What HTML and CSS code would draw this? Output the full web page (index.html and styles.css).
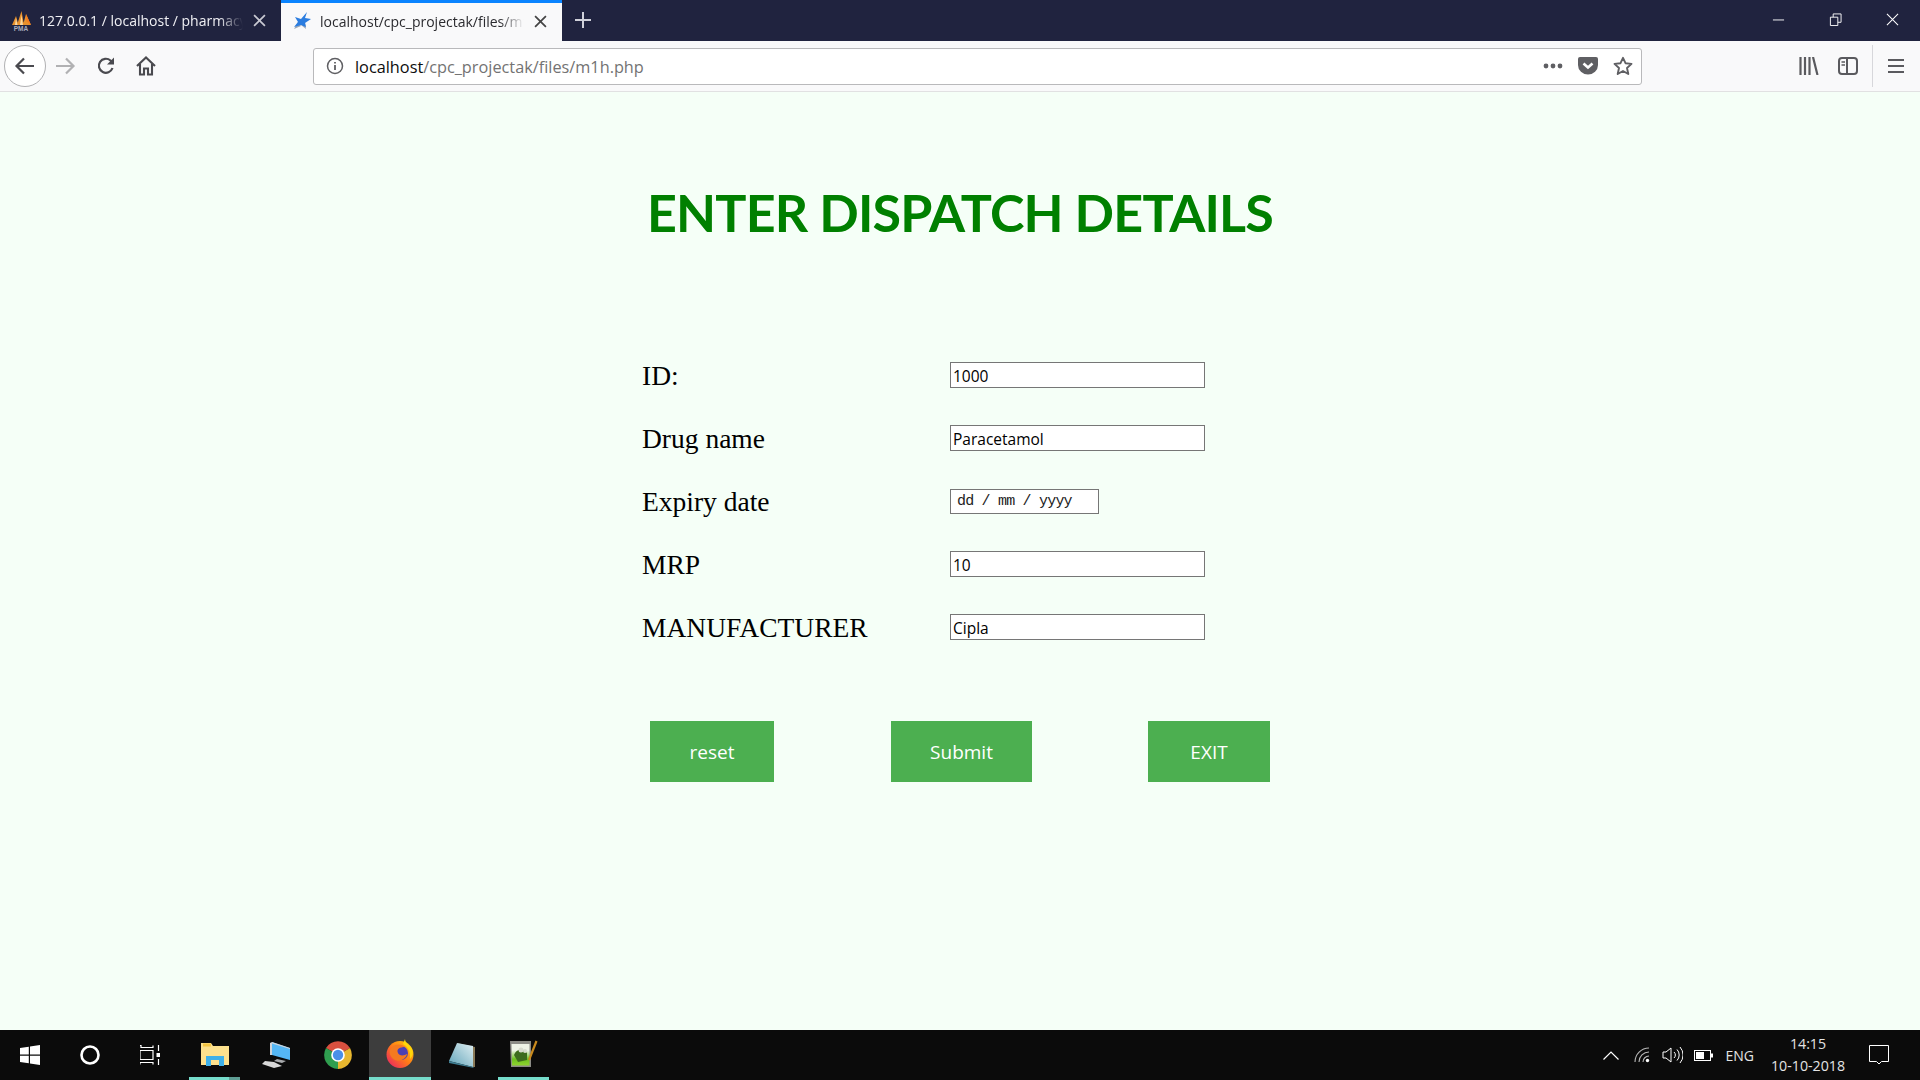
FILE: index.html
```html
<!DOCTYPE html>
<html lang="en">
<head>
    <meta charset="UTF-8">
    <title>localhost/cpc_projectak/files/m1h.php</title>
    <link rel="stylesheet" href="styles.css">
</head>
<body>
    <div class="window">
        <div class="tabbar">
            <div class="tab">
                <svg class="favicon" viewBox="0 0 20 20">
                    <path d="M1 14 L5 5 L7.500 14 Z M6 14 L10.500 0 L13 14 Z M12 14 L15 3 L20 14 Z" fill="#e8912c"/>
                    <path d="M4 14 L5 7 L6.500 14 Z M9 14 L10.500 4 L12 14 Z" fill="#fbd9a0"/>
                    <path d="M15 3 L20 14 L15.500 10 Z" fill="#f47a1f"/>
                    <text class="pma-text" x="10" y="20" text-anchor="middle">PMA</text>
                </svg>
                <span class="tab-title">127.0.0.1 / localhost / pharmacy</span>
                <svg class="tab-close" viewBox="0 0 12 12"><path d="M1 1 L11 11 M11 1 L1 11" stroke="#c8c9d2" stroke-width="1.6"/></svg>
            </div>
            <div class="tab tab-active">
                <svg class="favicon" viewBox="0 0 20 20">
                    <path d="M9 15 L2 18 L6 11 Z M14 18 L9 14 L13 11 Z" fill="#9aa7b8"/>
                    <path d="M15 1 L13 7 L19 8 L13 12 L14 16 L9 14 L2 16 L6 11 L3 6 L9 8 Z" fill="#2b7de0"/>
                </svg>
                <span class="tab-title">localhost/cpc_projectak/files/m1h.php</span>
                <svg class="tab-close" viewBox="0 0 12 12"><path d="M1 1 L11 11 M11 1 L1 11" stroke="#444" stroke-width="1.6"/></svg>
            </div>
            <div class="new-tab">
                <svg width="18" height="18" viewBox="0 0 18 18"><path d="M9 1 V17 M1 9 H17" stroke="#d0d1da" stroke-width="2"/></svg>
            </div>
            <div class="win-controls">
                <svg class="win-btn" viewBox="0 0 14 14"><path d="M1 7.5 H13" stroke="#fff"/></svg>
                <svg class="win-btn" viewBox="0 0 14 14"><path d="M1.5 4.5 H9.5 V13.5 H1.5 Z M4.5 4.5 V1 H13 V10 H9.5" fill="none" stroke="#fff"/></svg>
                <svg class="win-btn" viewBox="0 0 14 14"><path d="M1 1 L13 13 M13 1 L1 13" stroke="#fff" stroke-width="1.1"/></svg>
            </div>
        </div>

        <div class="toolbar">
            <div class="nav-btn back-btn">
                <svg width="22" height="22" viewBox="0 0 22 22"><path d="M20 11 H3 M10 3.5 L2.5 11 L10 18.5" fill="none" stroke="#4a4a4f" stroke-width="2.2"/></svg>
            </div>
            <div class="nav-btn">
                <svg width="22" height="22" viewBox="0 0 22 22"><path d="M2 11 H19 M12 3.5 L19.5 11 L12 18.5" fill="none" stroke="#b1b1b3" stroke-width="2.2"/></svg>
            </div>
            <div class="nav-btn nav-reload">
                <svg width="20" height="20" viewBox="0 0 20 20"><path d="M16.5 12 A7 7 0 1 1 14.5 4.5 L17 7" fill="none" stroke="#4a4a4f" stroke-width="2.2"/><path d="M18 1.5 V8.5 H11 Z" fill="#4a4a4f"/></svg>
            </div>
            <div class="nav-btn">
                <svg width="20" height="20" viewBox="0 0 20 20"><path d="M1 10 L10 1.5 L19 10 M4 8 V18.5 H8 V12.5 H12 V18.5 H16 V8" fill="none" stroke="#4a4a4f" stroke-width="2.1"/></svg>
            </div>
            <div class="urlbar">
                <svg class="info-icon" width="18" height="18" viewBox="0 0 18 18"><circle cx="9" cy="9" r="7.5" fill="none" stroke="#5f5f63" stroke-width="1.5"/><path d="M9 8 V13 M9 5 V6.5" stroke="#5f5f63" stroke-width="1.8"/></svg>
                <div class="url"><span class="url-host">localhost</span>/cpc_projectak/files/m1h.php</div>
                <svg width="20" height="6" viewBox="0 0 20 6"><circle cx="3" cy="3" r="2.4" fill="#5f5f63"/><circle cx="10" cy="3" r="2.4" fill="#5f5f63"/><circle cx="17" cy="3" r="2.4" fill="#5f5f63"/></svg>
                <svg class="url-pocket" width="20" height="18" viewBox="0 0 20 18"><path d="M2 0 H18 A2 2 0 0 1 20 2 V8 A10 9.5 0 0 1 0 8 V2 A2 2 0 0 1 2 0 Z" fill="#5f5f63"/><path d="M5.5 6.5 L10 10.5 L14.5 6.5" fill="none" stroke="#fff" stroke-width="2.6"/></svg>
                <svg class="url-star" width="20" height="20" viewBox="0 0 20 20"><path d="M10 1.8 L12.5 7.2 L18.5 7.9 L14 12 L15.3 18 L10 15 L4.7 18 L6 12 L1.5 7.9 L7.5 7.2 Z" fill="none" stroke="#5f5f63" stroke-width="1.9" stroke-linejoin="round"/></svg>
            </div>
            <div class="toolbar-right">
                <svg width="20" height="18" viewBox="0 0 20 18"><path d="M1.5 0 V18 M6 0 V18 M10.500 0 V18 M14 0 L18.500 18" fill="none" stroke="#5a5a5e" stroke-width="2.2"/></svg>
                <svg width="20" height="18" viewBox="0 0 20 18"><rect x="1" y="1" width="18" height="16" rx="3" fill="none" stroke="#5a5a5e" stroke-width="2"/><path d="M9 1 V17" stroke="#5a5a5e" stroke-width="2"/><path d="M3.500 5 H7 M3.500 8 H7" stroke="#5a5a5e" stroke-width="1.500"/></svg>
                <div class="toolbar-sep"></div>
                <svg width="16" height="16" viewBox="0 0 16 16"><path d="M0 2 H16 M0 8 H16 M0 14 H16" stroke="#5a5a5e" stroke-width="2.2"/></svg>
            </div>
        </div>

        <main class="page">
            <h1 class="page-title">ENTER DISPATCH DETAILS</h1>
            <form class="dispatch-form">
                <div class="form-rows">
                    <label class="field-label" for="id">ID:</label>
                    <input class="field" type="text" id="id" value="1000">

                    <label class="field-label" for="drug">Drug name</label>
                    <input class="field" type="text" id="drug" value="Paracetamol">

                    <label class="field-label" for="expiry">Expiry date</label>
                    <input class="field field-date" type="text" id="expiry" value="dd / mm / yyyy">

                    <label class="field-label" for="mrp">MRP</label>
                    <input class="field" type="text" id="mrp" value="10">

                    <label class="field-label" for="maker">MANUFACTURER</label>
                    <input class="field" type="text" id="maker" value="Cipla">
                </div>
                <div class="form-buttons">
                    <button class="btn btn-reset" type="reset">reset</button>
                    <button class="btn btn-submit" type="submit">Submit</button>
                    <button class="btn btn-exit" type="button">EXIT</button>
                </div>
            </form>
        </main>

        <footer class="taskbar">
            <div class="task-left">
                <div class="task-slot task-system">
                    <svg width="20" height="20" viewBox="0 0 20 20"><path d="M0 3 L8.800 1.700 V9.500 H0 Z M10 1.500 L20 0 V9.500 H10 Z M0 10.700 H8.800 V18.300 L0 17 Z M10 10.700 H20 V20 L10 18.500 Z" fill="#fff"/></svg>
                </div>
                <div class="task-slot task-system">
                    <svg width="22" height="22" viewBox="0 0 22 22"><circle cx="11" cy="11" r="8.500" fill="none" stroke="#fff" stroke-width="2.600"/></svg>
                </div>
                <div class="task-slot task-system">
                    <svg width="20" height="20" viewBox="0 0 20 20"><path d="M0 .5 H1 V2.500 H13 V.5 M0 5.500 H13 V14.500 H0 Z M0 19.500 V17.500 H13 V19.500 M18.500 0 V6 M18.500 14 V20" fill="none" stroke="#fff" stroke-width="1.200"/><rect x="16.500" y="8" width="4" height="4" fill="#fff"/></svg>
                </div>
                <div class="task-slot task-open task-stacked">
                    <svg width="28" height="24" viewBox="0 0 28 24"><path d="M0 1 H10 L12 4 H28 V23 H0 Z" fill="#fde18d"/><rect x="2" y="1.500" width="8" height="3" fill="#f4c542"/><path d="M5 24 V14 H23 V24 H18 V18 H10 V24 Z" fill="#3fb0e8"/></svg>
                </div>
                <div class="task-slot">
                    <svg width="28" height="26" viewBox="0 0 28 26"><path d="M10 0 L28 6 V18 L10 13 Z" fill="#55b7f5"/><path d="M10 0 L8 1 V13 L10 13 Z M10 0 L28 6 V7 L10 1.500 Z" fill="#cfd3d8"/><path d="M15 17 L24 19 L20 21 L12 19 Z" fill="#a9abae"/><path d="M3 19 L12 20 L20 24 L12 26 L0 22 Z" fill="#d8d8d8"/></svg>
                </div>
                <div class="task-slot">
                    <svg width="28" height="28" viewBox="0 0 28 28"><path d="M14 14 L2 7 A14 14 0 0 1 26 7 Z" fill="#d9503f"/><path d="M14 14 L2 7 A14 14 0 0 0 14 28 Z" fill="#2f9e4f"/><path d="M14 14 L26 7 A14 14 0 0 1 14 28 Z" fill="#e8b72f"/><circle cx="14" cy="14" r="6.800" fill="#fff"/><circle cx="14" cy="14" r="5.200" fill="#4a8fe8"/></svg>
                </div>
                <div class="task-slot task-active">
                    <svg width="28" height="29" viewBox="0 0 28 29">
                        <defs>
                            <linearGradient id="foxBody" x1="1" y1="0" x2="0" y2="1">
                                <stop offset="0" stop-color="#ffd60a"/>
                                <stop offset="0.5" stop-color="#ff7a18"/>
                                <stop offset="1" stop-color="#e6176f"/>
                            </linearGradient>
                        </defs>
                        <circle cx="14" cy="15.500" r="13.500" fill="url(#foxBody)"/>
                        <path d="M19 0 C19 4 24 6 26 10 C28 15 26 18 24 20 C25 12 21 7 17 5 Z" fill="#ffd60a"/>
                        <circle cx="15" cy="14" r="7" fill="#4b3fb5"/>
                        <path d="M4 11 C7 5 14 4 19 8 C14 8 10 10 12 14 C13 17 18 17 21 15 C20 20 14 23 9 21 C5 19 3 15 4 11 Z" fill="#f47a20"/>
                    </svg>
                </div>
                <div class="task-slot">
                    <svg width="28" height="26" viewBox="0 0 28 26">
                        <defs>
                            <linearGradient id="padFace" x1="0" y1="1" x2="1" y2="0">
                                <stop offset="0" stop-color="#5fa3b8"/>
                                <stop offset="1" stop-color="#dfeef2"/>
                            </linearGradient>
                        </defs>
                        <path d="M9 1 L27 5 V25 L25 25 Z" fill="#8a7a58"/>
                        <path d="M9 1 L25 4 V25 L1 19 Z" fill="url(#padFace)"/>
                        <path d="M1 19 L25 25 L26 26 L1 21 Z" fill="#3f7f94"/>
                    </svg>
                </div>
                <div class="task-slot task-open">
                    <svg width="28" height="28" viewBox="0 0 28 28">
                        <defs>
                            <linearGradient id="nppFace" x1="0" y1="0" x2="0" y2="1">
                                <stop offset="0.3" stop-color="#eef3e6"/>
                                <stop offset="0.7" stop-color="#6cc01f"/>
                                <stop offset="1" stop-color="#8fd42f"/>
                            </linearGradient>
                        </defs>
                        <path d="M0 1 H21 V27 H1 Z" fill="#8c8c86"/>
                        <path d="M1.500 4 H19.500 V25.500 H2 Z" fill="url(#nppFace)"/>
                        <path d="M4 15 C6 9 13 8 17 13 L17 20 L8 22 Z" fill="#3d6b1e"/>
                        <circle cx="11" cy="10" r="2.500" fill="#d8dccf"/>
                        <circle cx="15" cy="11" r="2" fill="#d8dccf"/>
                        <path d="M19 20 L26.500 1" stroke="#c98a1e" stroke-width="2.200"/>
                    </svg>
                </div>
            </div>
            <div class="tray">
                <svg width="16" height="9" viewBox="0 0 16 9"><path d="M.5 8.500 L8 1 L15.500 8.500" fill="none" stroke="#fff" stroke-width="1.200"/></svg>
                <svg class="tray-wifi" width="16" height="16" viewBox="0 0 16 16"><path d="M1 15 A14 14 0 0 1 15 1 M5 15 A10 10 0 0 1 15 5 M9 15 A6 6 0 0 1 15 9" fill="none" stroke="#b8b8b8" stroke-width="1.100"/><circle cx="13.500" cy="13.500" r="1.700" fill="#fff"/></svg>
                <svg class="tray-volume" width="21" height="18" viewBox="0 0 21 18"><path d="M1 6 H4 L9 2 V16 L4 12 H1 Z" fill="none" stroke="#fff"/><path d="M12 6 A4 4 0 0 1 12 12 M15 3.500 A8 8 0 0 1 15 14.500 M18 1 A12 12 0 0 1 18 17" fill="none" stroke="#fff"/></svg>
                <svg class="tray-battery" width="19" height="11" viewBox="0 0 19 11"><rect x=".5" y=".5" width="16" height="10" fill="none" stroke="#fff"/><rect x="2" y="2" width="8" height="7" fill="#fff"/><rect x="17" y="3.500" width="2" height="4" fill="#fff"/></svg>
                <span class="tray-lang">ENG</span>
                <div class="tray-clock">
                    <span>14:15</span>
                    <span>10-10-2018</span>
                </div>
                <svg class="tray-action" width="20" height="20" viewBox="0 0 20 20"><path d="M.5 .5 H19.500 V16.500 H12.500 L10 19 L7.500 16.500 H.5 Z" fill="none" stroke="#fff"/></svg>
            </div>
        </footer>
    </div>
</body>
</html>
```

FILE: styles.css
```css
* {
    box-sizing: border-box;
}

body {
    margin: 0;
    background-color: #f5fff7;
}

.window {
    display: flex;
    flex-direction: column;
    height: 1080px;
    overflow: hidden;
}

/* tabs */
.tabbar {
    display: flex;
    height: 41px;
    background-color: #20233f;
    font-family: "Open Sans", sans-serif;
    font-size: 14px;
}

.tab {
    display: flex;
    align-items: center;
    width: 281px;
    padding: 0 15px 0 11px;
    color: #f0f0f4;
}

.tab-active {
    border-top: 3px solid #0a84ff;
    background-color: #f9f9fa;
    color: #2a2a2e;
    padding-bottom: 2px;
}

.favicon {
    flex: none;
    width: 20px;
    height: 20px;
    margin-right: 8px;
}

.pma-text {
    fill: #a9acbd;
    font-family: "Liberation Sans", sans-serif;
    font-size: 6.500px;
    font-weight: 700;
}

.tab-title {
    flex: 1;
    overflow: hidden;
    white-space: nowrap;
    -webkit-mask-image: linear-gradient(to right, #000 88%, transparent);
    mask-image: linear-gradient(to right, #000 88%, transparent);
}

.tab-close {
    flex: none;
    width: 13px;
    height: 13px;
    margin-left: 10px;
}

.new-tab {
    display: flex;
    align-items: center;
    justify-content: center;
    width: 42px;
    padding-bottom: 2px;
}

.win-controls {
    display: flex;
    align-items: center;
    gap: 44px;
    margin-left: auto;
    padding: 0 21px 2px 0;
}

.win-btn {
    width: 13px;
    height: 13px;
}

/* toolbar */
.toolbar {
    display: flex;
    align-items: center;
    height: 51px;
    padding-left: 4px;
    background-color: #f9f9fa;
    border-bottom: 1px solid #e1e1e2;
}

.nav-btn {
    display: flex;
    align-items: center;
    justify-content: center;
    width: 40px;
    height: 42px;
}

.nav-reload {
    margin-left: 1px;
}

.back-btn {
    width: 42px;
    margin-right: -1px;
    background-color: #fff;
    border: 1px solid #b1b1b3;
    border-radius: 50%;
}

.urlbar {
    display: flex;
    align-items: center;
    width: 1329px;
    height: 37px;
    margin-left: 147px;
    padding: 0 8px 0 12px;
    background-color: #fff;
    border: 1px solid #b9b9bb;
    border-radius: 3px;
    font-family: "Open Sans", sans-serif;
    font-size: 16.300px;
}

.info-icon {
    margin-right: 11px;
}

.url {
    flex: 1;
    padding-top: 2px;
    color: #737373;
}

.url-host {
    color: #0c0c0d;
}

.url-pocket {
    margin-left: 15px;
}

.url-star {
    margin-left: 15px;
}

.toolbar-right {
    display: flex;
    align-items: center;
    flex: 1;
    padding-left: 157px;
}

.toolbar-right svg:nth-child(2) {
    margin-left: 19px;
}

.toolbar-sep {
    width: 1px;
    height: 42px;
    margin: 0 15px 0 14px;
    background-color: #d7d7db;
}

/* page */
.page {
    flex: 1;
    padding-top: 90px;
    background-color: #f5fff7;
}

.page-title {
    margin: 0 0 120px;
    color: #008000;
    font-family: "Lato", sans-serif;
    font-size: 52px;
    font-weight: 700;
    letter-spacing: -0.8px;
    line-height: 60px;
    text-align: center;
}

.dispatch-form {
    width: 640px;
    margin: 0 auto;
    padding-left: 2px;
}

.form-rows {
    display: grid;
    grid-template-columns: 308px 255px;
    grid-auto-rows: 26px;
    row-gap: 37px;
    align-items: center;
}

.field-label {
    padding-top: 1px;
    color: #000;
    font-family: "Liberation Serif", serif;
    font-size: 27.500px;
    white-space: nowrap;
}

.field {
    width: 255px;
    height: 26px;
    padding: 1px 2px 0;
    background-color: #fff;
    border: 1px solid #767676;
    border-radius: 0;
    color: #000;
    font-family: "Open Sans", sans-serif;
    font-size: 15.500px;
    outline: none;
}

.field-date {
    width: 149px;
    height: 25px;
    padding-left: 6px;
    color: #222;
    font-family: "Liberation Mono", monospace;
    font-size: 15px;
    letter-spacing: -0.8px;
}

.form-buttons {
    display: flex;
    margin-top: 81px;
    padding-left: 8px;
}

.btn {
    height: 61px;
    padding: 0;
    background-color: #4caf50;
    border: none;
    color: #fff;
    font-family: "Open Sans", sans-serif;
    font-size: 19px;
}

.btn-reset {
    width: 124px;
}

.btn-submit {
    width: 141px;
    margin-left: 117px;
}

.btn-exit {
    width: 122px;
    margin-left: 116px;
}

/* taskbar */
.taskbar {
    display: flex;
    justify-content: space-between;
    height: 50px;
    background-color: #0b0b0b;
    color: #fff;
    font-family: "Open Sans", sans-serif;
}

.task-left {
    display: flex;
}

.task-slot {
    display: flex;
    align-items: center;
    justify-content: center;
    width: 62px;
    height: 50px;
}

.task-system {
    width: 60px;
}

.task-open {
    width: 51px;
    margin-left: 5px;
    margin-right: 5px;
    border-bottom: 3px solid #76dccb;
}

.task-stacked {
    margin-left: 9px;
    border-image: linear-gradient(to right, #76dccb 78%, #5f9e94 78%) 1;
}

.task-active {
    background-color: #3d3d3d;
    border-bottom: 3px solid #76dccb;
}

.tray {
    display: flex;
    align-items: center;
    padding-right: 31px;
}

.tray-wifi {
    margin-left: 15px;
}

.tray-volume {
    margin-left: 12px;
}

.tray-battery {
    margin-left: 11px;
}

.tray-lang {
    margin-left: 13px;
    color: #e4e4e4;
    font-size: 14px;
}

.tray-clock {
    display: flex;
    flex-direction: column;
    align-items: center;
    width: 80px;
    margin-left: 14px;
    color: #e4e4e4;
    font-size: 14.200px;
    line-height: 22px;
}

.tray-action {
    margin-left: 21px;
}
```
